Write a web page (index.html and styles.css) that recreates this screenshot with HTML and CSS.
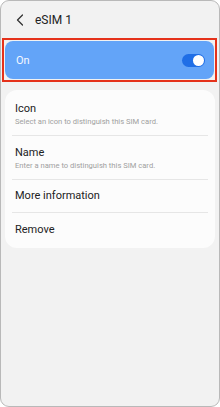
FILE: index.html
```html
<!DOCTYPE html>
<html>
<head>
<meta charset="utf-8">
<link rel="stylesheet" href="styles.css">
</head>
<body>
<div class="phone">
  <header class="topbar">
    <svg class="back" width="8" height="12" viewBox="0 0 8 12"><path d="M6.5 1 L1.5 6 L6.5 11" fill="none" stroke="#333" stroke-width="1.3" stroke-linecap="round" stroke-linejoin="round"/></svg>
    <span class="title">eSIM 1</span>
  </header>
  <div class="highlight">
    <div class="onrow">
      <span class="onlabel">On</span>
      <span class="toggle"><span class="knob"></span></span>
    </div>
  </div>
  <div class="card">
    <div class="item">
      <div class="ititle">Icon</div>
      <div class="isub">Select an icon to distinguish this SIM card.</div>
    </div>
    <div class="item">
      <div class="ititle">Name</div>
      <div class="isub">Enter a name to distinguish this SIM card.</div>
    </div>
    <div class="item single">
      <div class="ititle">More information</div>
    </div>
    <div class="item single">
      <div class="ititle">Remove</div>
    </div>
  </div>
</div>
</body>
</html>
```
FILE: styles.css
```css
* { box-sizing: border-box; }
html, body { margin: 0; padding: 0; background: #fff; }
body { font-family: Roboto, "Noto Sans", sans-serif; }
.phone {
  width: 220px;
  height: 407px;
  background: #f2f2f2;
  border: 1px solid #b9b9b9;
  border-radius: 9px;
  overflow: hidden;
  display: flex;
  flex-direction: column;
}
.topbar {
  height: 37px;
  display: flex;
  align-items: center;
  padding-left: 15px;
  gap: 11px;
}
.back { display: block; }
.title { font-size: 12px; color: #222; }
.highlight {
  margin: 0 2px 0 1px;
  border: 2px solid #e5321b;
  padding: 1px 1px;
}
.onrow {
  height: 38px;
  background: #63a4f8;
  border-radius: 8px;
  display: flex;
  align-items: center;
  justify-content: space-between;
  padding: 0 9px 0 11px;
}
.onlabel { color: #f4f8ff; font-size: 11px; }
.toggle {
  width: 23px;
  height: 13px;
  border-radius: 7px;
  background: #1f6ee6;
  position: relative;
  display: block;
}
.knob {
  position: absolute;
  right: 1px;
  top: 1px;
  width: 11px;
  height: 11px;
  border-radius: 50%;
  background: #fff;
}
.card {
  margin: 8px 4px 0 4px;
  background: #fcfcfc;
  border-radius: 12px;
  padding: 2px 7px 2px 7px;
}
.item {
  border-bottom: 1px solid #e6e6e6;
  padding: 9px 3px 8px 3px;
  height: 44px;
  display: flex;
  flex-direction: column;
  justify-content: center;
}
.item.single { height: 33px; padding-top: 0; padding-bottom: 0; }
.item:last-child { border-bottom: none; }
.ititle { font-size: 11px; color: #222; line-height: 14px; }
.isub { font-size: 7.6px; color: #a0a0a0; line-height: 10px; margin-top: 1px; }
```
